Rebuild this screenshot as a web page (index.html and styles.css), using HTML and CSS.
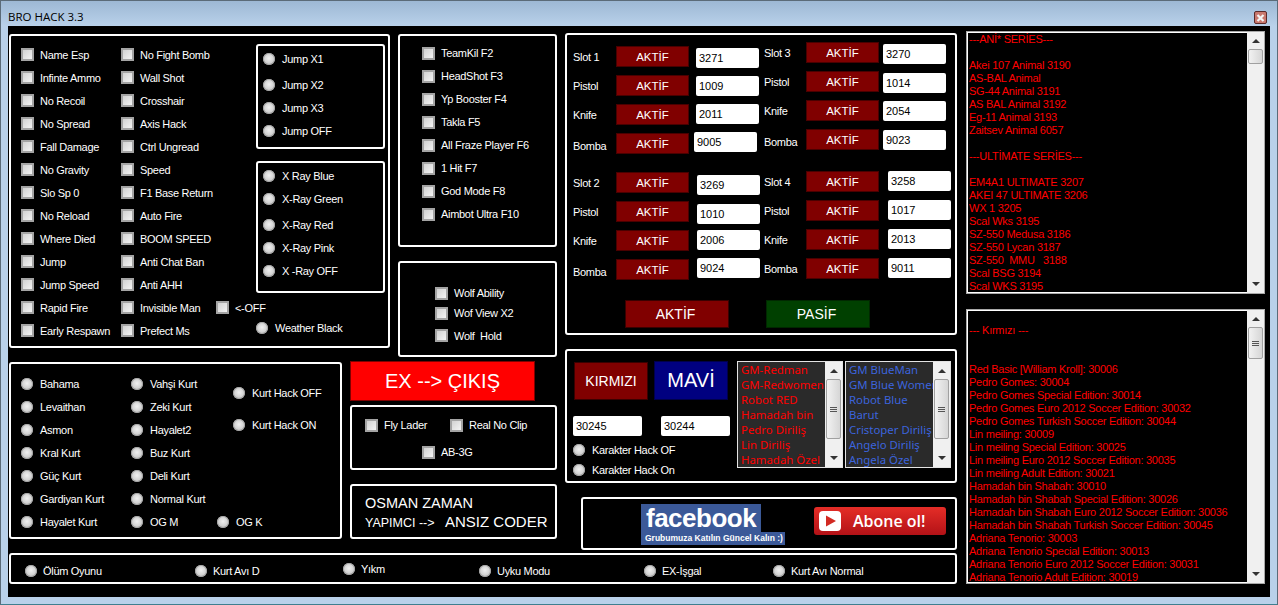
FILE: index.html
```html
<!DOCTYPE html>
<html lang="tr">
<head>
    <meta charset="UTF-8">
    <title>BRO HACK 3.3</title>
    <link rel="stylesheet" href="styles.css">
</head>
<body>
<div class="window">
    <div class="title-bar">
        <span class="title">BRO HACK 3.3</span>
        <span class="close-btn">
            <svg width="9" height="8" viewBox="0 0 9 8"><path d="M1.5 1 L7.5 7 M7.5 1 L1.5 7" stroke="#f4f4f4" stroke-width="2.2"/></svg>
        </span>
    </div>
    <div class="client">
        <div class="main">
            <div class="upper">
                <div class="left-group">
                    <div class="top-row">
                        <div class="panel hacks">
                            <div class="col hacks-a">
                                <label class="opt"><input type="checkbox">Name Esp</label>
                                <label class="opt"><input type="checkbox">Infinte Ammo</label>
                                <label class="opt"><input type="checkbox">No Recoil</label>
                                <label class="opt"><input type="checkbox">No Spread</label>
                                <label class="opt"><input type="checkbox">Fall Damage</label>
                                <label class="opt"><input type="checkbox">No Gravity</label>
                                <label class="opt"><input type="checkbox">Slo Sp 0</label>
                                <label class="opt"><input type="checkbox">No Reload</label>
                                <label class="opt"><input type="checkbox">Where Died</label>
                                <label class="opt"><input type="checkbox">Jump</label>
                                <label class="opt"><input type="checkbox">Jump Speed</label>
                                <label class="opt"><input type="checkbox">Rapid Fire</label>
                                <label class="opt"><input type="checkbox">Early Respawn</label>
                            </div>
                            <div class="col hacks-b">
                                <label class="opt"><input type="checkbox">No Fight Bomb</label>
                                <label class="opt"><input type="checkbox">Wall Shot</label>
                                <label class="opt"><input type="checkbox">Crosshair</label>
                                <label class="opt"><input type="checkbox">Axis Hack</label>
                                <label class="opt"><input type="checkbox">Ctrl Ungread</label>
                                <label class="opt"><input type="checkbox">Speed</label>
                                <label class="opt"><input type="checkbox">F1 Base Return</label>
                                <label class="opt"><input type="checkbox">Auto Fire</label>
                                <label class="opt"><input type="checkbox">BOOM SPEED</label>
                                <label class="opt"><input type="checkbox">Anti Chat Ban</label>
                                <label class="opt"><input type="checkbox">Anti AHH</label>
                                <div class="opt-pair">
                                    <label class="opt invisible-man"><input type="checkbox">Invisible Man</label>
                                    <label class="opt"><input type="checkbox">&lt;-OFF</label>
                                </div>
                                <label class="opt"><input type="checkbox">Prefect Ms</label>
                            </div>
                            <div class="col hacks-c">
                                <div class="panel jump-box">
                                    <label class="opt"><input type="radio" name="jump">Jump X1</label>
                                    <label class="opt step"><input type="radio" name="jump">Jump X2</label>
                                    <label class="opt"><input type="radio" name="jump">Jump X3</label>
                                    <label class="opt"><input type="radio" name="jump">Jump OFF</label>
                                </div>
                                <div class="panel xray-box">
                                    <label class="opt"><input type="radio" name="xray">X Ray Blue</label>
                                    <label class="opt"><input type="radio" name="xray">X-Ray Green</label>
                                    <label class="opt step"><input type="radio" name="xray">X-Ray Red</label>
                                    <label class="opt"><input type="radio" name="xray">X-Ray Pink</label>
                                    <label class="opt"><input type="radio" name="xray">X -Ray OFF</label>
                                </div>
                                <label class="opt weather"><input type="radio">Weather Black</label>
                            </div>
                        </div>
                        <div class="col keys-col">
                            <div class="panel keys">
                                <label class="opt"><input type="checkbox">TeamKil F2</label>
                                <label class="opt"><input type="checkbox">HeadShot F3</label>
                                <label class="opt"><input type="checkbox">Yp Booster F4</label>
                                <label class="opt"><input type="checkbox">Takla F5</label>
                                <label class="opt"><input type="checkbox">All Fraze Player F6</label>
                                <label class="opt"><input type="checkbox">1 Hit F7</label>
                                <label class="opt"><input type="checkbox">God Mode F8</label>
                                <label class="opt"><input type="checkbox">Aimbot Ultra F10</label>
                            </div>
                            <div class="panel wolf">
                                <label class="opt"><input type="checkbox">Wolf Ability</label>
                                <label class="opt"><input type="checkbox">Wof View X2</label>
                                <label class="opt wolf-hold"><input type="checkbox">Wolf&nbsp; Hold</label>
                            </div>
                        </div>
                    </div>
                    <div class="low-row">
                        <div class="panel kurt">
                            <div class="col kurt-a">
                                <label class="opt"><input type="radio" name="kurt">Bahama</label>
                                <label class="opt"><input type="radio" name="kurt">Levaithan</label>
                                <label class="opt"><input type="radio" name="kurt">Asmon</label>
                                <label class="opt"><input type="radio" name="kurt">Kral Kurt</label>
                                <label class="opt"><input type="radio" name="kurt">Güç Kurt</label>
                                <label class="opt"><input type="radio" name="kurt">Gardiyan Kurt</label>
                                <label class="opt"><input type="radio" name="kurt">Hayalet Kurt</label>
                            </div>
                            <div class="col kurt-b">
                                <label class="opt"><input type="radio" name="kurt">Vahşi Kurt</label>
                                <label class="opt"><input type="radio" name="kurt">Zeki Kurt</label>
                                <label class="opt"><input type="radio" name="kurt">Hayalet2</label>
                                <label class="opt"><input type="radio" name="kurt">Buz Kurt</label>
                                <label class="opt"><input type="radio" name="kurt">Deli Kurt</label>
                                <label class="opt"><input type="radio" name="kurt">Normal Kurt</label>
                                <div class="opt-pair">
                                    <label class="opt og-m"><input type="radio" name="kurt">OG M</label>
                                    <label class="opt"><input type="radio" name="kurt">OG K</label>
                                </div>
                            </div>
                            <div class="col kurt-c">
                                <label class="opt"><input type="radio" name="kurt-hack">Kurt Hack OFF</label>
                                <label class="opt"><input type="radio" name="kurt-hack">Kurt Hack ON</label>
                            </div>
                        </div>
                        <div class="col exit-col">
                            <button class="exit-btn">EX --&gt; ÇIKIŞ</button>
                            <div class="panel fly">
                                <div class="opt-pair">
                                    <label class="opt fly-lader"><input type="checkbox">Fly Lader</label>
                                    <label class="opt"><input type="checkbox">Real No Clip</label>
                                </div>
                                <label class="opt ab3g"><input type="checkbox">AB-3G</label>
                            </div>
                            <div class="panel credit">
                                <div class="credit-name">OSMAN ZAMAN</div>
                                <div class="credit-line"><span class="credit-role">YAPIMCI --&gt;</span><span class="credit-coder">ANSIZ CODER</span></div>
                            </div>
                        </div>
                    </div>
                </div>
                <div class="right-group">
                    <div class="panel slots">
                        <div class="slot-grid">
                            <div class="slot-col">
                                <div class="slot-block">
                                    <div class="slot-row"><span class="slot-label">Slot 1</span><button class="red-btn">AKTİF</button><input class="num down2" value="3271"></div>
                                    <div class="slot-row"><span class="slot-label">Pistol</span><button class="red-btn">AKTİF</button><input class="num down1" value="1009"></div>
                                    <div class="slot-row"><span class="slot-label">Knife</span><button class="red-btn">AKTİF</button><input class="num" value="2011"></div>
                                    <div class="slot-row"><span class="slot-label low">Bomba</span><button class="red-btn">AKTİF</button><input class="num up1 left2" value="9005"></div>
                                </div>
                                <div class="slot-block second">
                                    <div class="slot-row"><span class="slot-label">Slot 2</span><button class="red-btn">AKTİF</button><input class="num down3 right1" value="3269"></div>
                                    <div class="slot-row"><span class="slot-label">Pistol</span><button class="red-btn">AKTİF</button><input class="num down3 right1" value="1010"></div>
                                    <div class="slot-row"><span class="slot-label">Knife</span><button class="red-btn">AKTİF</button><input class="num right1" value="2006"></div>
                                    <div class="slot-row"><span class="slot-label low">Bomba</span><button class="red-btn">AKTİF</button><input class="num up1 right1" value="9024"></div>
                                </div>
                            </div>
                            <div class="slot-col right">
                                <div class="slot-block">
                                    <div class="slot-row"><span class="slot-label">Slot 3</span><button class="red-btn">AKTİF</button><input class="num down2" value="3270"></div>
                                    <div class="slot-row"><span class="slot-label">Pistol</span><button class="red-btn">AKTİF</button><input class="num down2" value="1014"></div>
                                    <div class="slot-row"><span class="slot-label">Knife</span><button class="red-btn">AKTİF</button><input class="num down1" value="2054"></div>
                                    <div class="slot-row"><span class="slot-label low">Bomba</span><button class="red-btn">AKTİF</button><input class="num down1" value="9023"></div>
                                </div>
                                <div class="slot-block third">
                                    <div class="slot-row"><span class="slot-label">Slot 4</span><button class="red-btn">AKTİF</button><input class="num right5" value="3258"></div>
                                    <div class="slot-row"><span class="slot-label">Pistol</span><button class="red-btn">AKTİF</button><input class="num right5" value="1017"></div>
                                    <div class="slot-row"><span class="slot-label">Knife</span><button class="red-btn">AKTİF</button><input class="num right5" value="2013"></div>
                                    <div class="slot-row"><span class="slot-label">Bomba</span><button class="red-btn">AKTİF</button><input class="num right5" value="9011"></div>
                                </div>
                            </div>
                        </div>
                        <div class="slot-actions">
                            <button class="big-btn aktif">AKTİF</button>
                            <button class="big-btn pasif">PASİF</button>
                        </div>
                    </div>
                    <div class="panel chars">
                        <div class="chars-left">
                            <div class="team-btns">
                                <button class="team-btn kirmizi">KIRMIZI</button>
                                <button class="team-btn mavi">MAVİ</button>
                            </div>
                            <div class="team-inputs">
                                <input class="num" value="30245">
                                <input class="num" value="30244">
                            </div>
                            <label class="opt char-opt"><input type="radio" name="char">Karakter Hack OF</label>
                            <label class="opt char-opt"><input type="radio" name="char">Karakter Hack On</label>
                        </div>
                        <div class="char-list red">
                            <div class="char-items">
                                <div>GM-Redman</div>
                                <div>GM-Redwomen</div>
                                <div>Robot RED</div>
                                <div>Hamadah bin</div>
                                <div>Pedro Diriliş</div>
                                <div>Lin Diriliş</div>
                                <div>Hamadah Özel</div>
                            </div>
                            <div class="scrollbar">
                                <span class="arrow up"></span>
                                <span class="thumb long"><i></i><i></i><i></i></span>
                                <span class="arrow down"></span>
                            </div>
                        </div>
                        <div class="char-list blue">
                            <div class="char-items">
                                <div>GM BlueMan</div>
                                <div>GM Blue Women</div>
                                <div>Robot Blue</div>
                                <div>Barut</div>
                                <div>Cristoper Diriliş</div>
                                <div>Angelo Diriliş</div>
                                <div>Angela Özel</div>
                            </div>
                            <div class="scrollbar">
                                <span class="arrow up"></span>
                                <span class="thumb long"><i></i><i></i><i></i></span>
                                <span class="arrow down"></span>
                            </div>
                        </div>
                    </div>
                    <div class="panel social">
                        <div class="fb">
                            <div class="fb-logo">facebook</div>
                            <div class="fb-caption">Grubumuza Katılın Güncel Kalın :)</div>
                        </div>
                        <div class="yt-btn">
                            <svg class="yt-icon" width="22" height="20" viewBox="0 0 22 20"><rect width="22" height="20" rx="4" fill="#fff"/><path d="M7 4.5 L17 10 L7 15.5 Z" fill="#d22a22"/></svg>
                            <span>Abone ol!</span>
                        </div>
                    </div>
                </div>
            </div>
            <div class="panel modes">
                <label class="opt"><input type="radio" name="mode">Ölüm Oyunu</label>
                <label class="opt"><input type="radio" name="mode">Kurt Avı D</label>
                <label class="opt raised"><input type="radio" name="mode">Yıkm</label>
                <label class="opt"><input type="radio" name="mode">Uyku Modu</label>
                <label class="opt"><input type="radio" name="mode">EX-İşgal</label>
                <label class="opt"><input type="radio" name="mode">Kurt Avı Normal</label>
            </div>
        </div>
        <div class="side">
            <div class="code-list first">
                <div class="code-text">---ANİ* SERİES---

Akei 107 Animal 3190
AS-BAL Animal
SG-44 Animal 3191
AS BAL Animal 3192
Eg-11 Animal 3193
Zaitsev Animal 6057

---ULTİMATE SERİES---

EM4A1 ULTIMATE 3207
AKEI 47 ULTIMATE 3206
WX 1 3205
Scal Wks 3195
SZ-550 Medusa 3186
SZ-550 Lycan 3187
SZ-550  MMU   3188
Scal BSG 3194
Scal WKS 3195</div>
                <div class="scrollbar">
                    <span class="arrow up"></span>
                    <span class="thumb small"></span>
                    <span class="arrow down"></span>
                </div>
            </div>
            <div class="code-list second">
                <div class="code-text">
--- Kırmızı ---


Red Basic [William Kroll]: 30006
Pedro Gomes: 30004
Pedro Gomes Special Edition: 30014
Pedro Gomes Euro 2012 Soccer Edition: 30032
Pedro Gomes Turkish Soccer Edition: 30044
Lin meiling: 30009
Lin meiling Special Edition: 30025
Lin meiling Euro 2012 Soccer Edition: 30035
Lin meiling Adult Edition: 30021
Hamadah bin Shabah: 30010
Hamadah bin Shabah Special Edition: 30026
Hamadah bin Shabah Euro 2012 Soccer Edition: 30036
Hamadah bin Shabah Turkish Soccer Edition: 30045
Adriana Tenorio: 30003
Adriana Tenorio Special Edition: 30013
Adriana Tenorio Euro 2012 Soccer Edition: 30031
Adriana Tenorio Adult Edition: 30019</div>
                <div class="scrollbar">
                    <span class="arrow up"></span>
                    <span class="thumb medium"><i></i><i></i><i></i></span>
                    <span class="arrow down"></span>
                </div>
            </div>
        </div>
    </div>
</div>
</body>
</html>
```

FILE: styles.css
```css
:root {
    --frame: #b9d1ea;
    --dark-red: #800000;
    --font: "Liberation Sans", Arial, sans-serif;
}

* {
    box-sizing: border-box;
}

html, body {
    margin: 0;
    padding: 0;
    overflow: hidden;
}

body {
    font-family: var(--font);
    font-size: 11px;
    letter-spacing: -0.3px;
    color: #fff;
}

.window {
    width: 1278px;
    height: 605px;
    border: 1px solid #5b6b78;
    border-bottom-color: #3f7f8f;
    background: var(--frame);
}

.title-bar {
    height: 25px;
    padding: 8px 10px 0 7px;
    display: flex;
    justify-content: space-between;
    background: linear-gradient(#9db8d4, #b9d1ea);
}

.title {
    font-family: "Open Sans", sans-serif;
    font-size: 11.5px;
    letter-spacing: 0;
    line-height: 15px;
    color: #000;
}

.close-btn {
    width: 13px;
    height: 13px;
    margin-top: 2px;
    display: flex;
    align-items: center;
    justify-content: center;
    background: #c9786e;
    border: 1px solid #5a2a2a;
    border-radius: 2px;
}

.client {
    width: 1262px;
    height: 571px;
    margin-left: 7px;
    display: flex;
    background: #000;
}

.main {
    width: 948px;
    margin-left: 1px;
    display: flex;
    flex-direction: column;
}

.upper {
    height: 524px;
    display: flex;
    gap: 8px;
}

.panel {
    border: 2px solid #fff;
    border-radius: 3px;
    background: #000;
}

.col {
    display: flex;
    flex-direction: column;
}

.opt {
    height: 23px;
    display: flex;
    align-items: center;
    gap: 6px;
    white-space: nowrap;
}

.opt-pair {
    display: flex;
}

/* win7 style check and radio */
input[type="checkbox"], input[type="radio"] {
    appearance: none;
    flex: none;
    margin: 0;
}

input[type="checkbox"] {
    width: 13px;
    height: 13px;
    background: linear-gradient(135deg, #d2d2d2, #f4f4f4);
    border: 2px solid #a4a4a4;
}

input[type="radio"] {
    width: 12px;
    height: 12px;
    border-radius: 50%;
    background: radial-gradient(circle at 50% 45%, #f0f0f0 0, #d0d0d0 55%, #909090 100%);
    box-shadow: inset 0 0 0 1px #a4a4a4;
}

/* main hack panel */
.left-group {
    width: 548px;
    padding-top: 8px;
}

.top-row {
    height: 323px;
    display: flex;
    gap: 8px;
}

.hacks {
    width: 381px;
    height: 314px;
    padding: 7px 0 0 10px;
    display: flex;
}

.hacks-a {
    width: 100px;
}

.hacks-b {
    width: 135px;
}

.invisible-man {
    flex: none;
    width: 95px;
}

.hacks-c {
    margin-top: 1px;
}

.jump-box {
    width: 129px;
    height: 105px;
    padding: 1.5px 0 0 5px;
}

.jump-box .opt, .xray-box .opt {
    gap: 7px;
}

.step {
    margin-top: 3px;
}

.xray-box {
    width: 129px;
    height: 132px;
    margin-top: 12px;
    padding: 1.5px 0 0 5px;
}

.weather {
    margin-top: 23px;
    gap: 7px;
}

.keys-col {
    gap: 14px;
}

.keys {
    width: 159px;
    height: 213px;
    padding: 5.5px 0 0 22px;
}

.wolf {
    width: 159px;
    height: 96px;
    padding: 20px 0 0 35px;
}

.wolf .opt {
    height: 20px;
}

.wolf .wolf-hold {
    margin-top: 2.5px;
}

/* wolf panel and exit */
.low-row {
    display: flex;
    gap: 8px;
    margin-top: 4px;
}

.kurt {
    width: 333px;
    height: 177px;
    margin-top: 1px;
    padding: 8.5px 0 0 10px;
    display: flex;
}

.kurt .opt {
    gap: 7px;
}

.kurt-a {
    width: 110px;
}

.kurt-b {
    width: 102px;
}

.og-m {
    flex: none;
    width: 86px;
}

.kurt-c {
    margin-top: 9px;
    gap: 9px;
}

.exit-col {
    width: 207px;
}

.exit-btn {
    width: 185px;
    height: 40px;
    padding: 0;
    font-family: var(--font);
    font-size: 20px;
    letter-spacing: 0;
    color: #fff;
    background: #f00;
    border: 1px solid #800000;
}

.fly {
    height: 65px;
    margin-top: 4px;
    padding: 6.5px 0 0 13px;
}

.fly-lader {
    flex: none;
    width: 85px;
}

.ab3g {
    margin: 4px 0 0 57px;
}

.credit {
    height: 55px;
    margin-top: 14px;
    padding: 9px 0 0 13px;
    letter-spacing: 0;
}

.credit-name {
    font-size: 14.5px;
    line-height: 17px;
}

.credit-line {
    display: flex;
    align-items: baseline;
    line-height: 20px;
}

.credit-role {
    width: 80px;
    font-size: 12.5px;
}

.credit-coder {
    font-size: 15px;
}

/* slots */
.right-group {
    width: 392px;
    padding-top: 7px;
    display: flex;
    flex-direction: column;
    gap: 14px;
}

.slots {
    height: 302px;
    padding-left: 6px;
}

.slot-grid {
    display: flex;
}

.slot-col {
    width: 193px;
    padding-top: 11px;
}

.slot-col.right {
    padding-top: 7px;
}

.slot-col.right .slot-label {
    width: 42px;
}

.slot-block.second {
    margin-top: 10px;
}

.slot-block.third {
    margin-top: 13px;
}

.slot-row {
    height: 29px;
    display: flex;
    align-items: flex-start;
}

.slot-label {
    width: 43px;
    margin-top: 4px;
    line-height: 14px;
}

.slot-label.low {
    margin-top: 6px;
}

.red-btn {
    width: 73px;
    height: 21px;
    padding: 0;
    font-family: var(--font);
    font-size: 11.5px;
    letter-spacing: 0;
    color: #fff;
    background: var(--dark-red);
    border: 1px solid #4a0000;
}

.num {
    width: 63px;
    height: 20px;
    margin: 0 0 0 7px;
    padding: 0 3px;
    font-family: var(--font);
    font-size: 11px;
    color: #000;
    background: #fff;
    border: none;
    border-radius: 2px;
}

.slot-col.right .num {
    margin-left: 4px;
}

.num.down1 {
    margin-top: 1px;
}

.num.down2 {
    margin-top: 2px;
}

.num.down3 {
    margin-top: 3px;
}

.num.up1 {
    margin-top: -1px;
}

.num.left2 {
    margin-left: 5px;
}

.num.right1 {
    margin-left: 8px;
}

.slot-col.right .num.right5 {
    margin-left: 9px;
}

.slot-actions {
    display: flex;
    gap: 37px;
    margin: 12px 0 0 52px;
}

.big-btn {
    width: 104px;
    height: 28px;
    padding: 0 3px 0 0;
    font-family: var(--font);
    font-size: 14px;
    letter-spacing: 0;
    color: #fff;
    border: 1px solid #3a0000;
}

.big-btn.aktif {
    background: var(--dark-red);
}

.big-btn.pasif {
    background: #004000;
    border-color: #002800;
}

/* character panel */
.chars {
    height: 134px;
    padding: 10px 0 0 6px;
    display: flex;
}

.chars-left {
    width: 164px;
}

.team-btns {
    display: flex;
    gap: 6px;
    margin-left: 1px;
}

.team-btn {
    width: 74px;
    height: 38px;
    padding: 0;
    font-family: var(--font);
    letter-spacing: 0;
    color: #fff;
    border: 1px solid #3a0000;
}

.team-btn.kirmizi {
    margin-top: 1px;
    font-size: 14px;
    background: var(--dark-red);
}

.team-btn.mavi {
    height: 39px;
    font-size: 20px;
    background: #000080;
    border-color: #00004a;
}

.team-inputs {
    display: flex;
    gap: 19px;
    margin-top: 16px;
}

.team-inputs .num {
    width: 69px;
    margin: 0;
}

.char-opt {
    height: 20px;
    gap: 7px;
}

.team-inputs + .char-opt {
    margin-top: 4px;
}

.char-list {
    width: 106px;
    height: 107px;
    margin-right: 2px;
    display: flex;
    border: 1px solid #e4e4e4;
    background: #2a2a2a;
}

.char-items {
    width: 87px;
    padding: 0 0 0 3px;
    overflow: hidden;
    font-family: "Noto Sans", sans-serif;
    font-size: 11.4px;
    letter-spacing: 0;
    line-height: 15px;
    white-space: nowrap;
}

.char-list.red {
    color: #f00;
}

.char-list.blue {
    color: #3c64dc;
}

.scrollbar {
    flex: none;
    width: 17px;
    display: flex;
    flex-direction: column;
    align-items: center;
    background: #f0f0f0;
}

.arrow {
    flex: none;
    width: 0;
    height: 0;
    border-left: 4px solid transparent;
    border-right: 4px solid transparent;
}

.arrow.up {
    margin-top: 7px;
    border-bottom: 4px solid #333;
}

.arrow.down {
    margin-top: auto;
    margin-bottom: 7px;
    border-top: 4px solid #333;
}

.thumb {
    width: 15px;
    margin-top: 6px;
    display: flex;
    flex-direction: column;
    align-items: center;
    justify-content: center;
    gap: 1px;
    background: linear-gradient(90deg, #f2f2f2, #d6d6d6);
    border: 1px solid #a0a0a0;
    border-radius: 2px;
}

.thumb i {
    width: 7px;
    height: 1px;
    background: #555;
}

.thumb.small {
    height: 15px;
}

.thumb.medium {
    height: 32px;
}

.thumb.long {
    height: 60px;
}

/* social links */
.social {
    width: 376px;
    height: 53px;
    margin-left: 16px;
    padding: 5px 0 0 58px;
    display: flex;
}

.fb {
    width: 144px;
}

.fb-logo {
    width: 120px;
    height: 28px;
    padding-left: 5px;
    background: #3b5998;
    font-size: 26px;
    font-weight: bold;
    letter-spacing: -0.5px;
    line-height: 29px;
}

.fb-caption {
    height: 13px;
    padding-left: 4px;
    background: #3b5998;
    font-size: 8.5px;
    font-weight: bold;
    letter-spacing: 0;
    line-height: 13px;
    white-space: nowrap;
}

.yt-btn {
    width: 132px;
    height: 28px;
    margin: 3px 0 0 29px;
    padding-left: 5px;
    display: flex;
    align-items: center;
    gap: 12px;
    background: linear-gradient(#e52d27, #b31217);
    border-radius: 3px;
    font-family: "Open Sans", sans-serif;
    font-size: 16px;
    font-weight: 600;
    letter-spacing: 0;
}

/* bottom bar */
.modes {
    height: 31px;
    margin-top: 3px;
    padding: 4px 0 0 14px;
    display: grid;
    grid-template-columns: 170px 148px 136px 165px 129px auto;
    align-items: center;
}

.modes .raised {
    margin-top: -4px;
}

/* right lists */
.side {
    width: 299px;
    margin-left: 9px;
    padding-top: 5px;
}

.code-list {
    display: flex;
    border: 1px solid #a8a8a8;
    background: #000;
}

.code-list.first {
    height: 263px;
}

.code-list.second {
    height: 275px;
    margin-top: 15px;
}

.code-text {
    flex: 1;
    padding: 0 0 0 1px;
    overflow: hidden;
    color: #f00;
    border: 1px solid #fff;
    border-right: none;
    letter-spacing: -0.25px;
    line-height: 13px;
    white-space: pre;
}
```
